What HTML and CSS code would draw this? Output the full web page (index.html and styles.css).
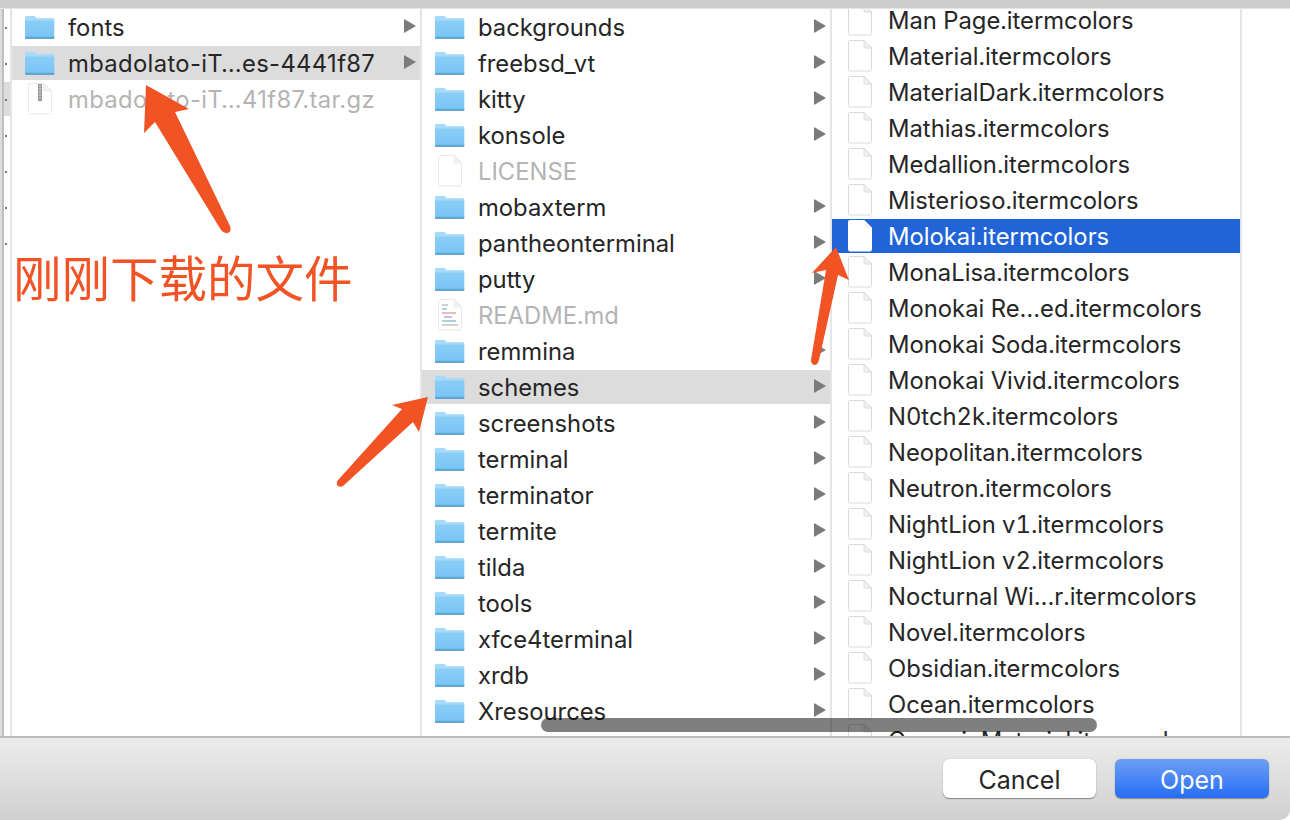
FILE: index.html
```html
<!DOCTYPE html>
<html lang="en">
<head>
    <meta charset="UTF-8">
    <title>Open</title>
    <link rel="stylesheet" href="styles.css">
</head>
<body>
    <svg class="defs" width="0" height="0">
        <defs>
            <linearGradient id="folderFill" x1="0" y1="0" x2="0" y2="1">
                <stop offset="0" stop-color="#8fd0f8"/>
                <stop offset="1" stop-color="#78c3f4"/>
            </linearGradient>
            <symbol id="folder" viewBox="0 0 31 25">
                <path d="M1 3.5C1 2 1.8 1 3 1h6.500c1 0 1.500.5 2 1.200L12.800 3.500H29c.8 0 1.300.6 1.300 1.400V22.500c0 1-.6 1.600-1.500 1.600H2.500C1.600 24.100 1 23.500 1 22.500z" fill="url(#folderFill)"/>
                <path d="M1 5.500h29.300v-.6c0-.8-.5-1.400-1.300-1.400H12.800L11.500 2.200C11 1.500 10.500 1 9.500 1H3C1.800 1 1 2 1 3.500z" fill="#a5dafa"/>
                <path d="M1 22.500c0 1 .6 1.600 1.500 1.600h26.300c.9 0 1.500-.6 1.500-1.600v-.7H1z" fill="#5fa6d8"/>
            </symbol>
            <symbol id="file" viewBox="0 0 24 32">
                <path class="doc-line" d="M1.500.5H16L23.500 8V29.500c0 1-.6 1.500-1.500 1.500H2c-.9 0-1.500-.5-1.500-1.500V1.500C.5.900.900.500 1.500.500z" fill="#fff"/>
                <path class="doc-line" d="M16 .5V6.500c0 1 .5 1.500 1.500 1.500h6z" fill="#f2f2f2"/>
            </symbol>
        </defs>
    </svg>

    <div class="topbar"></div>

    <div class="browser">
        <div class="sliver">
            <span class="sliver-mark"></span>
            <i></i><i></i><i></i><i></i><i></i><i></i><i></i>
        </div>

        <div class="col">
            <div class="row"><svg class="folder"><use href="#folder"/></svg><span>fonts</span><b class="arrow"></b></div>
            <div class="row active row-long"><svg class="folder"><use href="#folder"/></svg><span>mbadolato-iT…es-4441f87</span><b class="arrow"></b></div>
            <div class="row dim row-long">
                <svg class="doc" viewBox="0 0 24 32">
                    <use href="#file"/>
                    <path d="M10 1h4v17h-4z" fill="#9a9a9a"/>
                    <path d="M11 3h2M11 6h2M11 9h2M11 12h2M11 15h2" stroke="#e6e6e6"/>
                </svg>
                <span>mbadolato-iT…41f87.tar.gz</span>
            </div>
        </div>

        <div class="col">
            <div class="row"><svg class="folder"><use href="#folder"/></svg><span>backgrounds</span><b class="arrow"></b></div>
            <div class="row"><svg class="folder"><use href="#folder"/></svg><span>freebsd_vt</span><b class="arrow"></b></div>
            <div class="row"><svg class="folder"><use href="#folder"/></svg><span>kitty</span><b class="arrow"></b></div>
            <div class="row"><svg class="folder"><use href="#folder"/></svg><span>konsole</span><b class="arrow"></b></div>
            <div class="row dim"><svg class="doc"><use href="#file"/></svg><span>LICENSE</span></div>
            <div class="row"><svg class="folder"><use href="#folder"/></svg><span>mobaxterm</span><b class="arrow"></b></div>
            <div class="row"><svg class="folder"><use href="#folder"/></svg><span>pantheonterminal</span><b class="arrow"></b></div>
            <div class="row"><svg class="folder"><use href="#folder"/></svg><span>putty</span><b class="arrow"></b></div>
            <div class="row dim">
                <svg class="doc" viewBox="0 0 24 32">
                    <use href="#file"/>
                    <path d="M4 6h6" stroke="#cfcfcf" stroke-width="2"/>
                    <path d="M4 10h5" stroke="#a9d3d8" stroke-width="2"/>
                    <path d="M4 14h14" stroke="#e6bcc0" stroke-width="2"/>
                    <path d="M6 18h8" stroke="#c9b8f0" stroke-width="2"/>
                    <path d="M4 22h14" stroke="#a9d3d8" stroke-width="2"/>
                    <path d="M4 26h16" stroke="#d2d2d2" stroke-width="2"/>
                </svg>
                <span>README.md</span>
            </div>
            <div class="row"><svg class="folder"><use href="#folder"/></svg><span>remmina</span><b class="arrow"></b></div>
            <div class="row active"><svg class="folder"><use href="#folder"/></svg><span>schemes</span><b class="arrow"></b></div>
            <div class="row"><svg class="folder"><use href="#folder"/></svg><span>screenshots</span><b class="arrow"></b></div>
            <div class="row"><svg class="folder"><use href="#folder"/></svg><span>terminal</span><b class="arrow"></b></div>
            <div class="row"><svg class="folder"><use href="#folder"/></svg><span>terminator</span><b class="arrow"></b></div>
            <div class="row"><svg class="folder"><use href="#folder"/></svg><span>termite</span><b class="arrow"></b></div>
            <div class="row"><svg class="folder"><use href="#folder"/></svg><span>tilda</span><b class="arrow"></b></div>
            <div class="row"><svg class="folder"><use href="#folder"/></svg><span>tools</span><b class="arrow"></b></div>
            <div class="row"><svg class="folder"><use href="#folder"/></svg><span>xfce4terminal</span><b class="arrow"></b></div>
            <div class="row"><svg class="folder"><use href="#folder"/></svg><span>xrdb</span><b class="arrow"></b></div>
            <div class="row"><svg class="folder"><use href="#folder"/></svg><span>Xresources</span><b class="arrow"></b></div>
        </div>

        <div class="col col-files">
            <div class="row"><svg class="doc"><use href="#file"/></svg><span>Man Page.itermcolors</span></div>
            <div class="row"><svg class="doc"><use href="#file"/></svg><span>Material.itermcolors</span></div>
            <div class="row"><svg class="doc"><use href="#file"/></svg><span>MaterialDark.itermcolors</span></div>
            <div class="row"><svg class="doc"><use href="#file"/></svg><span>Mathias.itermcolors</span></div>
            <div class="row"><svg class="doc"><use href="#file"/></svg><span>Medallion.itermcolors</span></div>
            <div class="row"><svg class="doc"><use href="#file"/></svg><span>Misterioso.itermcolors</span></div>
            <div class="row selected"><svg class="doc"><use href="#file"/></svg><span>Molokai.itermcolors</span></div>
            <div class="row"><svg class="doc"><use href="#file"/></svg><span>MonaLisa.itermcolors</span></div>
            <div class="row"><svg class="doc"><use href="#file"/></svg><span>Monokai Re…ed.itermcolors</span></div>
            <div class="row"><svg class="doc"><use href="#file"/></svg><span>Monokai Soda.itermcolors</span></div>
            <div class="row"><svg class="doc"><use href="#file"/></svg><span>Monokai Vivid.itermcolors</span></div>
            <div class="row"><svg class="doc"><use href="#file"/></svg><span>N0tch2k.itermcolors</span></div>
            <div class="row"><svg class="doc"><use href="#file"/></svg><span>Neopolitan.itermcolors</span></div>
            <div class="row"><svg class="doc"><use href="#file"/></svg><span>Neutron.itermcolors</span></div>
            <div class="row"><svg class="doc"><use href="#file"/></svg><span>NightLion v1.itermcolors</span></div>
            <div class="row"><svg class="doc"><use href="#file"/></svg><span>NightLion v2.itermcolors</span></div>
            <div class="row"><svg class="doc"><use href="#file"/></svg><span>Nocturnal Wi…r.itermcolors</span></div>
            <div class="row"><svg class="doc"><use href="#file"/></svg><span>Novel.itermcolors</span></div>
            <div class="row"><svg class="doc"><use href="#file"/></svg><span>Obsidian.itermcolors</span></div>
            <div class="row"><svg class="doc"><use href="#file"/></svg><span>Ocean.itermcolors</span></div>
            <div class="row"><svg class="doc"><use href="#file"/></svg><span>OceanicMaterial.itermcolors</span></div>
        </div>

        <div class="scrollbar"></div>
    </div>

    <div class="footer">
        <button class="btn">Cancel</button>
        <button class="btn btn-primary">Open</button>
    </div>

    <!-- annotations drawn on top of the screenshot -->
    <svg class="marks" width="1290" height="820" viewBox="0 0 1290 820">
        <path d="M146 85L189 109L175 112L230 226Q232 231 228 233Q224 234 221 230L155 122L144 133z"/>
        <path d="M428 397L419 432L413 422L343 486Q339 488 337 485Q336 482 339 479L402 409L392 405z"/>
        <path d="M836 247L849 280L838 275L819 360Q818 365 814 365Q811 364 811 360L826 270L812 273z"/>
    </svg>
    <div class="note">刚刚下载的文件</div>
</body>
</html>
```

FILE: styles.css
```css
* {
    box-sizing: border-box;
}

body {
    margin: 0;
    width: 1290px;
    height: 820px;
    overflow: hidden;
    position: relative;
    display: flex;
    flex-direction: column;
    font-family: Inter, "Noto Sans", sans-serif;
    font-size: 23.8px;
    font-feature-settings: "tnum";
    color: #262626;
    background-color: #fff;
}

.defs {
    position: absolute;
}

.topbar {
    height: 9px;
    flex: none;
    background-color: #cdcdcd;
    border-bottom: 1px solid #e4e4e4;
}

.browser {
    flex: 1;
    min-height: 0;
    display: flex;
    position: relative;
    overflow: hidden;
}

.sliver {
    width: 12px;
    flex: none;
    position: relative;
    display: flex;
    flex-direction: column;
    gap: 34px;
    padding: 18px 0 0 4px;
    background-color: #fff;
    border-left: 2px solid #ddd;
    border-right: 2px solid #e5e5e5;
    box-shadow: inset 2px 0 0 #bfbfbf;
}

.sliver i {
    display: block;
    width: 2px;
    height: 2px;
    margin-left: -1px;
    background-color: #777;
    position: relative;
}

.sliver-mark {
    position: absolute;
    left: 2px;
    top: 73px;
    width: 6px;
    height: 34px;
    background-color: #dcdcdc;
}

.col {
    width: 410px;
    flex: none;
    padding-top: 1px;
    border-right: 2px solid #e5e5e5;
    overflow: hidden;
}

.col-files {
    padding-top: 0;
}

.col-files .row:first-child {
    margin-top: -6px;
}

.row {
    height: 34px;
    margin-bottom: 2px;
    display: flex;
    align-items: center;
    position: relative;
    line-height: 34px;
    white-space: nowrap;
}

.row span {
    position: absolute;
    left: 56px;
    top: 1px;
}

.row-long {
    font-feature-settings: normal;
    letter-spacing: 0.35px;
}

.active {
    background-color: #dcdcdc;
}

.selected {
    background-color: #2064d8;
    color: #fff;
}

.dim {
    color: #b4b4b4;
}

.folder {
    width: 31px;
    height: 25px;
    margin-left: 12px;
}

.doc {
    width: 24px;
    height: 32px;
    margin-left: 16px;
    overflow: visible;
    --doc-line: #dadada;
}

.doc-line {
    stroke: var(--doc-line);
}

.dim .doc {
    --doc-line: #e8e8e8;
}

.selected .doc {
    --doc-line: #fff;
}

.arrow {
    position: absolute;
    right: 4px;
    top: 9px;
    width: 0;
    height: 0;
    border-left: 12px solid #7b7b7b;
    border-top: 7px solid transparent;
    border-bottom: 7px solid transparent;
}

.scrollbar {
    position: absolute;
    left: 541px;
    top: 709px;
    width: 556px;
    height: 14px;
    border-radius: 7px;
    background-color: rgba(0, 0, 0, 0.5);
}

.footer {
    height: 84px;
    flex: none;
    display: flex;
    justify-content: flex-end;
    gap: 19px;
    padding: 21px 21px 0 0;
    border-top: 2px solid #bcbcbc;
    border-bottom-right-radius: 10px;
    background: linear-gradient(#ececec, #d0d0d0);
}

.btn {
    width: 153px;
    height: 39px;
    padding: 3px 0 0;
    border: none;
    border-radius: 6px;
    font-family: inherit;
    font-size: 25px;
    color: #262626;
    background-color: #fff;
    box-shadow: 0 0 1px rgba(0, 0, 0, 0.3), 0 1px 1px rgba(0, 0, 0, 0.35);
}

.btn-primary {
    width: 154px;
    color: #fff;
    background: linear-gradient(#6f9ff4, #256df6);
}

.marks {
    position: absolute;
    left: 0;
    top: 0;
    fill: #f25324;
}

.note {
    position: absolute;
    left: 13px;
    top: 242px;
    font-family: "Noto Sans CJK SC", sans-serif;
    font-size: 48.5px;
    line-height: 68px;
    color: #f25324;
}
```
